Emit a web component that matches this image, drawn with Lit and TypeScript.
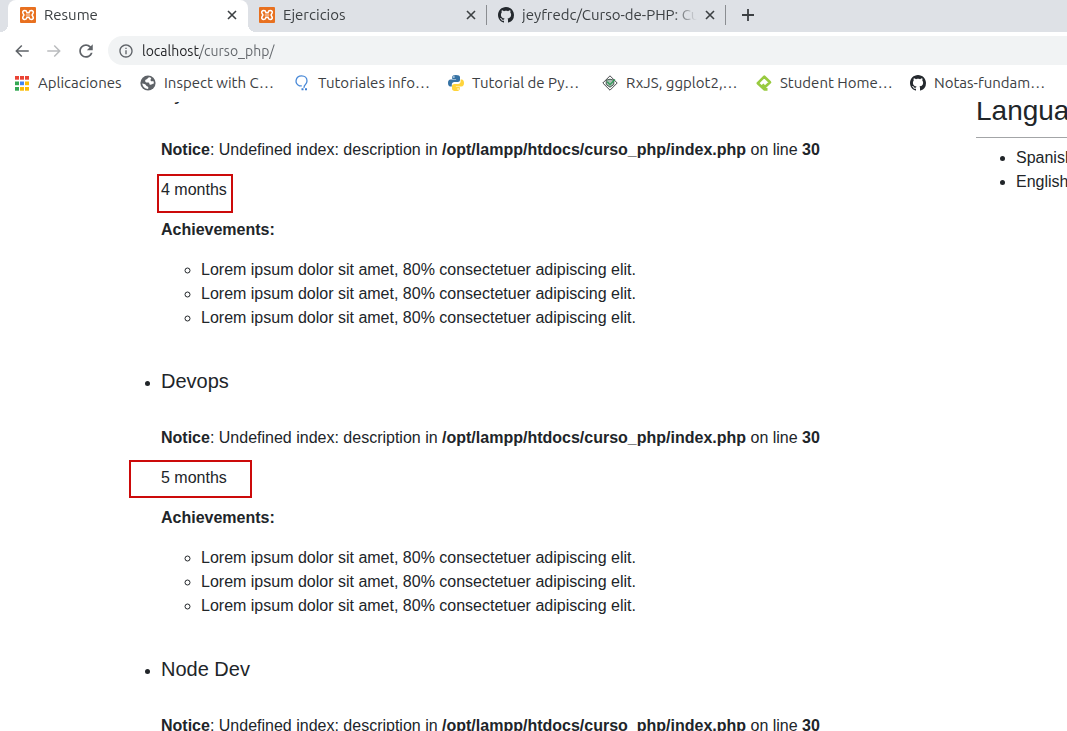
import { LitElement, html, css, svg } from "lit";
import { customElement, property } from "lit/decorators.js";

const xampp = html`<svg class="icon" viewBox="0 0 16 16" aria-hidden="true">
  <rect width="16" height="16" rx="1" fill="#e8701f" />
  <path d="M4.800 3.500C2.800 3.500 2.500 4.800 2.900 6L3.900 8 2.900 10C2.500 11.200 2.800 12.500 4.800 12.500S6.700 11.500 7 10.200H9C9.300 11.500 9.200 12.500 11.200 12.500S13.500 11.200 13.100 10L12.100 8 13.100 6C13.500 4.800 13.200 3.500 11.200 3.500S9.300 4.500 9 5.800H7C6.700 4.500 6.800 3.500 4.800 3.500Z" fill="none" stroke="#fff" stroke-width="1.600" />
  <path d="M5.800 8H10.200" stroke="#fbe3d3" stroke-width="1" />
</svg>`;

const github = html`<svg class="icon" viewBox="0 0 16 16" aria-hidden="true">
  <path fill="#24292e" d="M8 0C3.58 0 0 3.58 0 8c0 3.54 2.29 6.53 5.47 7.59.4.07.55-.17.55-.38 0-.19-.01-.82-.01-1.49-2.01.37-2.53-.49-2.69-.94-.09-.23-.48-.94-.82-1.13-.28-.15-.68-.52-.01-.53.63-.01 1.08.58 1.23.82.72 1.21 1.87.87 2.33.66.07-.52.28-.87.51-1.07-1.78-.2-3.64-.89-3.64-3.95 0-.87.31-1.59.82-2.15-.08-.2-.36-1.02.08-2.12 0 0 .67-.21 2.2.82.64-.18 1.32-.27 2-.27s1.36.09 2 .27c1.53-1.04 2.2-.82 2.2-.82.44 1.1.16 1.92.08 2.12.51.56.82 1.27.82 2.15 0 3.07-1.87 3.75-3.65 3.95.29.25.54.73.54 1.48 0 1.07-.01 1.93-.01 2.2 0 .21.15.46.55.38A8.01 8.01 0 0 0 16 8c0-4.42-3.58-8-8-8z" />
</svg>`;

const gridColors = ["#ea4335", "#ea4335", "#ea4335", "#34a853", "#4285f4", "#fbbc05", "#34a853", "#fbbc05", "#fbbc05"];
const apps = html`<svg class="icon" viewBox="0 0 16 16" aria-hidden="true">
  ${gridColors.map((c, i) => svg`<rect x=${1 + (i % 3) * 5} y=${1 + Math.floor(i / 3) * 5.5} width="4" height="3.700" fill=${c} />`)}
</svg>`;

const globe = html`<svg class="icon" viewBox="0 0 16 16" aria-hidden="true">
  <circle cx="8" cy="8" r="7.600" fill="#5f6368" />
  <path fill="#fff" d="M9.200 2.200C7.500 2.800 7.600 4.200 6 4.600 5 5 4.800 6.600 5.800 7.200 7 7.700 8.300 7 9 7.800 9.600 8.600 9 9.600 10.300 9.800 11.600 9.900 12.400 9 13.900 8.600 13.900 7.600 13.700 6.800 13.300 6 12 6.600 11 6.400 10.600 5.500 10.200 4.300 11.300 3.900 11.200 2.900 10.600 2.500 9.900 2.300 9.200 2.200ZM2.200 8.600C2.500 11.600 4.800 13.900 8 13.900 8.800 12.900 8.300 11.700 7.200 11.300 6 10.900 6.200 9.600 5 9.200 4 8.900 3.100 8.900 2.200 8.600Z" />
</svg>`;

const bulb = html`<svg class="icon" viewBox="0 0 16 16" aria-hidden="true">
  <path fill="none" stroke="#4a8ad8" stroke-width="1.300" d="M7.800 10.900H5.500C3 9.600 1.700 7.600 2.100 5.300 2.600 2.500 4.800.9 7.600.9 10.800.9 13 3 13 5.900 13 8.400 11.300 9.300 10.400 10.800L9.900 12.900" />
  <path fill="#3f7fd2" d="M7.500 13.300H9.500V15.300H7.500ZM11 13.300H13V15.300H11Z" />
</svg>`;

const python = html`<svg class="icon" viewBox="0 0 16 16" aria-hidden="true">
  <path fill="#3672a4" d="M7.900 0C5.300 0 4.200.9 4.200 2.300V4H8.100V4.600H2.500C.9 4.600 0 5.900 0 8S.9 11.400 2.300 11.400H3.800V9.400C3.800 8 5 7 6.300 7H10C11.100 7 12 6.100 12 5V2.300C12 .8 10.500 0 7.900 0ZM5.900 1.200A.8.8 0 1 1 5.900 2.800.8.8 0 0 1 5.900 1.200Z" />
  <path fill="#ffd43b" d="M8.100 16C10.700 16 11.800 15.100 11.800 13.700V12H7.900V11.400H13.500C15.100 11.400 16 10.100 16 8S15.100 4.600 13.700 4.600H12.600V6.600C12.600 8 11.400 9 10.100 9H6.300C5.200 9 4 9.900 4 11V13.700C4 15.200 5.500 16 8.100 16ZM10.100 14.800A.8.8 0 1 1 10.100 13.200.8.8 0 0 1 10.100 14.800Z" />
</svg>`;

const diamond = html`<svg class="icon" viewBox="0 0 16 16" aria-hidden="true">
  <path fill="#fff" stroke="#45494c" stroke-width="1" d="M8 .8 15.200 8 8 15.200.8 8Z" />
  <path fill="#a9bdb2" stroke="#45584f" stroke-width="1" d="M4.200 5.200 8 4.200 11.800 5.200V9.500L8 12.200 4.200 9.500Z" />
  <path fill="none" stroke="#2f9a56" stroke-width="1.300" d="M5.200 6.800 8 9.600 13 4.500" />
</svg>`;

const platzi = html`<svg class="icon" viewBox="0 0 16 16" aria-hidden="true">
  <path fill="none" stroke="#98ca3f" stroke-width="2.600" stroke-linejoin="round" d="M6.400 9.400 9 12 14 7.300 8.300 1.700 1.800 8.200 8.300 14.400H11.500" />
</svg>`;

const closeIcon = html`<svg class="cross" viewBox="0 0 10 10" aria-hidden="true"><path d="M1 1 9 9M9 1 1 9" stroke="#3c4043" stroke-width="1.600" /></svg>`;

const glyph = (d: string, color = "#5f6368", size = 18) =>
  html`<svg width=${size} height=${size} viewBox="0 0 24 24" fill=${color} aria-hidden="true"><path d=${d} /></svg>`;

const BACK = "M21 11H6.830l5.590-5.590L11 4l-8 8 8 8 1.410-1.410L6.830 13H21v-2z";
const FORWARD = "M13 4l-1.410 1.410L17.170 11H3v2h14.170l-5.580 5.590L13 20l8-8z";
const RELOAD = "M18.360 5.640C16.730 4.010 14.490 3 12 3 7.030 3 3 7.030 3 12s4.030 9 9 9c4.200 0 7.700-2.870 8.700-6.750h-2.340C17.440 16.870 14.940 18.750 12 18.750c-3.730 0-6.750-3.020-6.750-6.750S8.270 5.250 12 5.250c1.870 0 3.530.780 4.750 2L13.130 10.870H21V3z";
const INFO = "M11 7h2v2h-2zm0 4h2v6h-2zm1-9C6.480 2 2 6.480 2 12s4.480 10 10 10 10-4.480 10-10S17.520 2 12 2zm0 18c-4.410 0-8-3.590-8-8s3.590-8 8-8 8 3.590 8 8-3.590 8-8 8z";

const tabs = [
  { title: "Resume", icon: xampp, active: true },
  { title: "Ejercicios", icon: xampp, active: false },
  { title: "jeyfredc/Curso-de-PHP: Curso", icon: github, active: false },
];

const bookmarks = [
  { label: "Aplicaciones", icon: apps },
  { label: "Inspect with C…", icon: globe },
  { label: "Tutoriales info…", icon: bulb },
  { label: "Tutorial de Py…", icon: python },
  { label: "RxJS, ggplot2,…", icon: diamond },
  { label: "Student Home…", icon: platzi },
  { label: "Notas-fundam…", icon: github },
];

@customElement("browser-chrome")
export class BrowserChrome extends LitElement {
  static styles = css`
    :host {
      display: block;
      font: 15px/20px Ubuntu, "Noto Sans", sans-serif;
      color: #3c4043;
    }
    button {
      display: flex;
      align-items: center;
      padding: 0;
      border: 0;
      background: none;
      color: inherit;
      font: inherit;
    }
    svg { display: block; flex: none; }
    .icon { width: 16px; height: 16px; }
    .cross { width: 10px; height: 10px; }
    .strip {
      display: flex;
      height: 32px;
      padding-left: 8px;
      background: #dee1e6;
    }
    .tab {
      position: relative;
      display: flex;
      flex: 0 1 240px;
      min-width: 0;
      box-sizing: border-box;
      align-items: center;
      gap: 8px;
      padding: 0 11px 2px 12px;
    }
    .tab.active { background: #fff; border-radius: 8px 8px 0 0; }
    .tab.active::before,
    .tab.active::after {
      content: "";
      position: absolute;
      bottom: 0;
      width: 8px;
      height: 8px;
    }
    .tab.active::before {
      right: 100%;
      background: radial-gradient(circle at 0 0, transparent 8px, #fff 8px);
    }
    .tab.active::after {
      left: 100%;
      background: radial-gradient(circle at 100% 0, transparent 8px, #fff 8px);
    }
    .tab:not(.active) { flex-basis: 239px; padding-left: 11px; }
    .tab:not(.active)::after {
      content: "";
      position: absolute;
      right: 0;
      top: 5px;
      width: 1px;
      height: 20px;
      background: #8a8d91;
    }
    .select { flex: 1; min-width: 0; gap: 8px; }
    .title {
      flex: 1;
      min-width: 0;
      overflow: hidden;
      white-space: nowrap;
      text-align: left;
      mask-image: linear-gradient(to right, #000 calc(100% - 24px), transparent);
    }
    .add { width: 44px; padding: 0 0 2px; justify-content: center; }
    .toolbar {
      display: flex;
      align-items: center;
      padding: 4px 0 4px 8px;
      background: #fff;
    }
    .nav { display: flex; gap: 4px; margin-right: 8px; }
    .nav button { width: 28px; height: 28px; justify-content: center; }
    .omnibox {
      display: flex;
      flex: 1;
      align-items: center;
      gap: 8px;
      height: 29px;
      padding-left: 10px;
      border-radius: 15px 0 0 15px;
      background: #f1f3f4;
    }
    .url {
      flex: 1;
      min-width: 0;
      padding: 0;
      border: 0;
      outline: 0;
      font: 14px/20px Ubuntu, "Noto Sans", sans-serif;
      color: #202124;
      background: linear-gradient(to right, #202124 58px, #5f6368 58px) text;
      -webkit-text-fill-color: transparent;
    }
    .bookmarks {
      display: flex;
      gap: 16px;
      height: 33px;
      padding: 0 0 0 14px;
      background: #fff;
      overflow: hidden;
    }
    .bookmark {
      display: flex;
      flex: 0 0 138px;
      align-items: center;
      gap: 8px;
      padding-bottom: 6px;
      box-sizing: border-box;
      color: inherit;
      text-decoration: none;
      white-space: nowrap;
    }
    .bookmark:first-child { flex-basis: 110px; }
  `;

  render() {
    return html`
      <div class="strip">
        ${tabs.map((t) => html`
          <div class="tab ${t.active ? "active" : ""}">
            <button class="select" aria-pressed=${t.active}>${t.icon}<span class="title">${t.title}</span></button>
            <button class="close" aria-label="Close">${closeIcon}</button>
          </div>`)}
        <button class="add" aria-label="New tab">
          <svg width="12" height="12" viewBox="0 0 12 12"><path d="M6 0V12M0 6H12" stroke="#3c4043" stroke-width="1.800" /></svg>
        </button>
      </div>
      <div class="toolbar">
        <div class="nav">
          <button aria-label="Back">${glyph(BACK)}</button>
          <button aria-label="Forward">${glyph(FORWARD, "#babcbe")}</button>
          <button aria-label="Reload">${glyph(RELOAD)}</button>
        </div>
        <label class="omnibox">
          ${glyph(INFO, "#5f6368", 16)}
          <input class="url" type="text" aria-label="Address" value="localhost/curso_php/" spellcheck="false" />
        </label>
      </div>
      <nav class="bookmarks">
        ${bookmarks.map((b) => html`<a class="bookmark" href="#">${b.icon}<span>${b.label}</span></a>`)}
      </nav>
    `;
  }
}

@customElement("job-entry")
export class JobEntry extends LitElement {
  @property() heading = "";
  @property() duration = "";
  @property() mark = "";

  static styles = css`
    :host { display: block; }
    h5 { margin: 0 0 33px; font-size: 20px; font-weight: 400; line-height: 24px; }
    p { margin: 0 0 16px; }
    ul { margin: 0 0 39px; padding-left: 40px; list-style: circle; }
    .duration { position: relative; }
    .frame {
      position: absolute;
      box-sizing: border-box;
      border: 2px solid #cc0a0a;
    }
    .snug { left: -4px; top: -4px; width: 76px; height: 39px; }
    .wide { left: -32px; top: -6px; width: 123px; height: 38px; }
  `;

  render() {
    return html`
      <h5>${this.heading}</h5>
      <p><b>Notice</b>: Undefined index: description in <b>/opt/lampp/htdocs/curso_php/index.php</b> on line <b>30</b></p>
      <p class="duration">${this.duration}${this.mark ? html`<span class="frame ${this.mark}"></span>` : ""}</p>
      <p><b>Achievements:</b></p>
      <ul>
        ${[1, 2, 3].map(() => html`<li>Lorem ipsum dolor sit amet, 80% consectetuer adipiscing elit.</li>`)}
      </ul>
    `;
  }
}

const jobs = [
  { heading: "Python Dev", duration: "4 months", mark: "snug" },
  { heading: "Devops", duration: "5 months", mark: "wide" },
  { heading: "Node Dev", duration: "", mark: "" },
];

@customElement("app-root")
export class AppRoot extends LitElement {
  static styles = css`
    :host {
      display: flex;
      flex-direction: column;
      height: 100vh;
      overflow: hidden;
      background: #fff;
    }
    browser-chrome { flex: none; }
    .viewport {
      flex: 1;
      min-height: 0;
      overflow: hidden;
      font: 16px/24px "Liberation Sans", Arial, sans-serif;
      color: #212529;
    }
    .page {
      display: grid;
      grid-template-columns: minmax(0, 1fr) 91px;
      margin-top: -21px;
      padding-left: 121px;
    }
    ul { margin: 0; padding-left: 40px; }
    aside { padding-top: 13px; white-space: nowrap; overflow: hidden; }
    h3 {
      margin: 0 0 8px;
      padding-bottom: 9px;
      border-bottom: 1px solid #a3a5a7;
      font-size: 28px;
      font-weight: 400;
      line-height: 34px;
    }
  `;

  render() {
    return html`
      <browser-chrome></browser-chrome>
      <div class="viewport">
        <div class="page">
          <main>
            <ul>
              ${jobs.map((j) => html`<li><job-entry heading=${j.heading} duration=${j.duration} mark=${j.mark}></job-entry></li>`)}
            </ul>
          </main>
          <aside>
            <h3>Languages</h3>
            <ul>
              <li>Spanish</li>
              <li>English</li>
            </ul>
          </aside>
        </div>
      </div>
    `;
  }
}
